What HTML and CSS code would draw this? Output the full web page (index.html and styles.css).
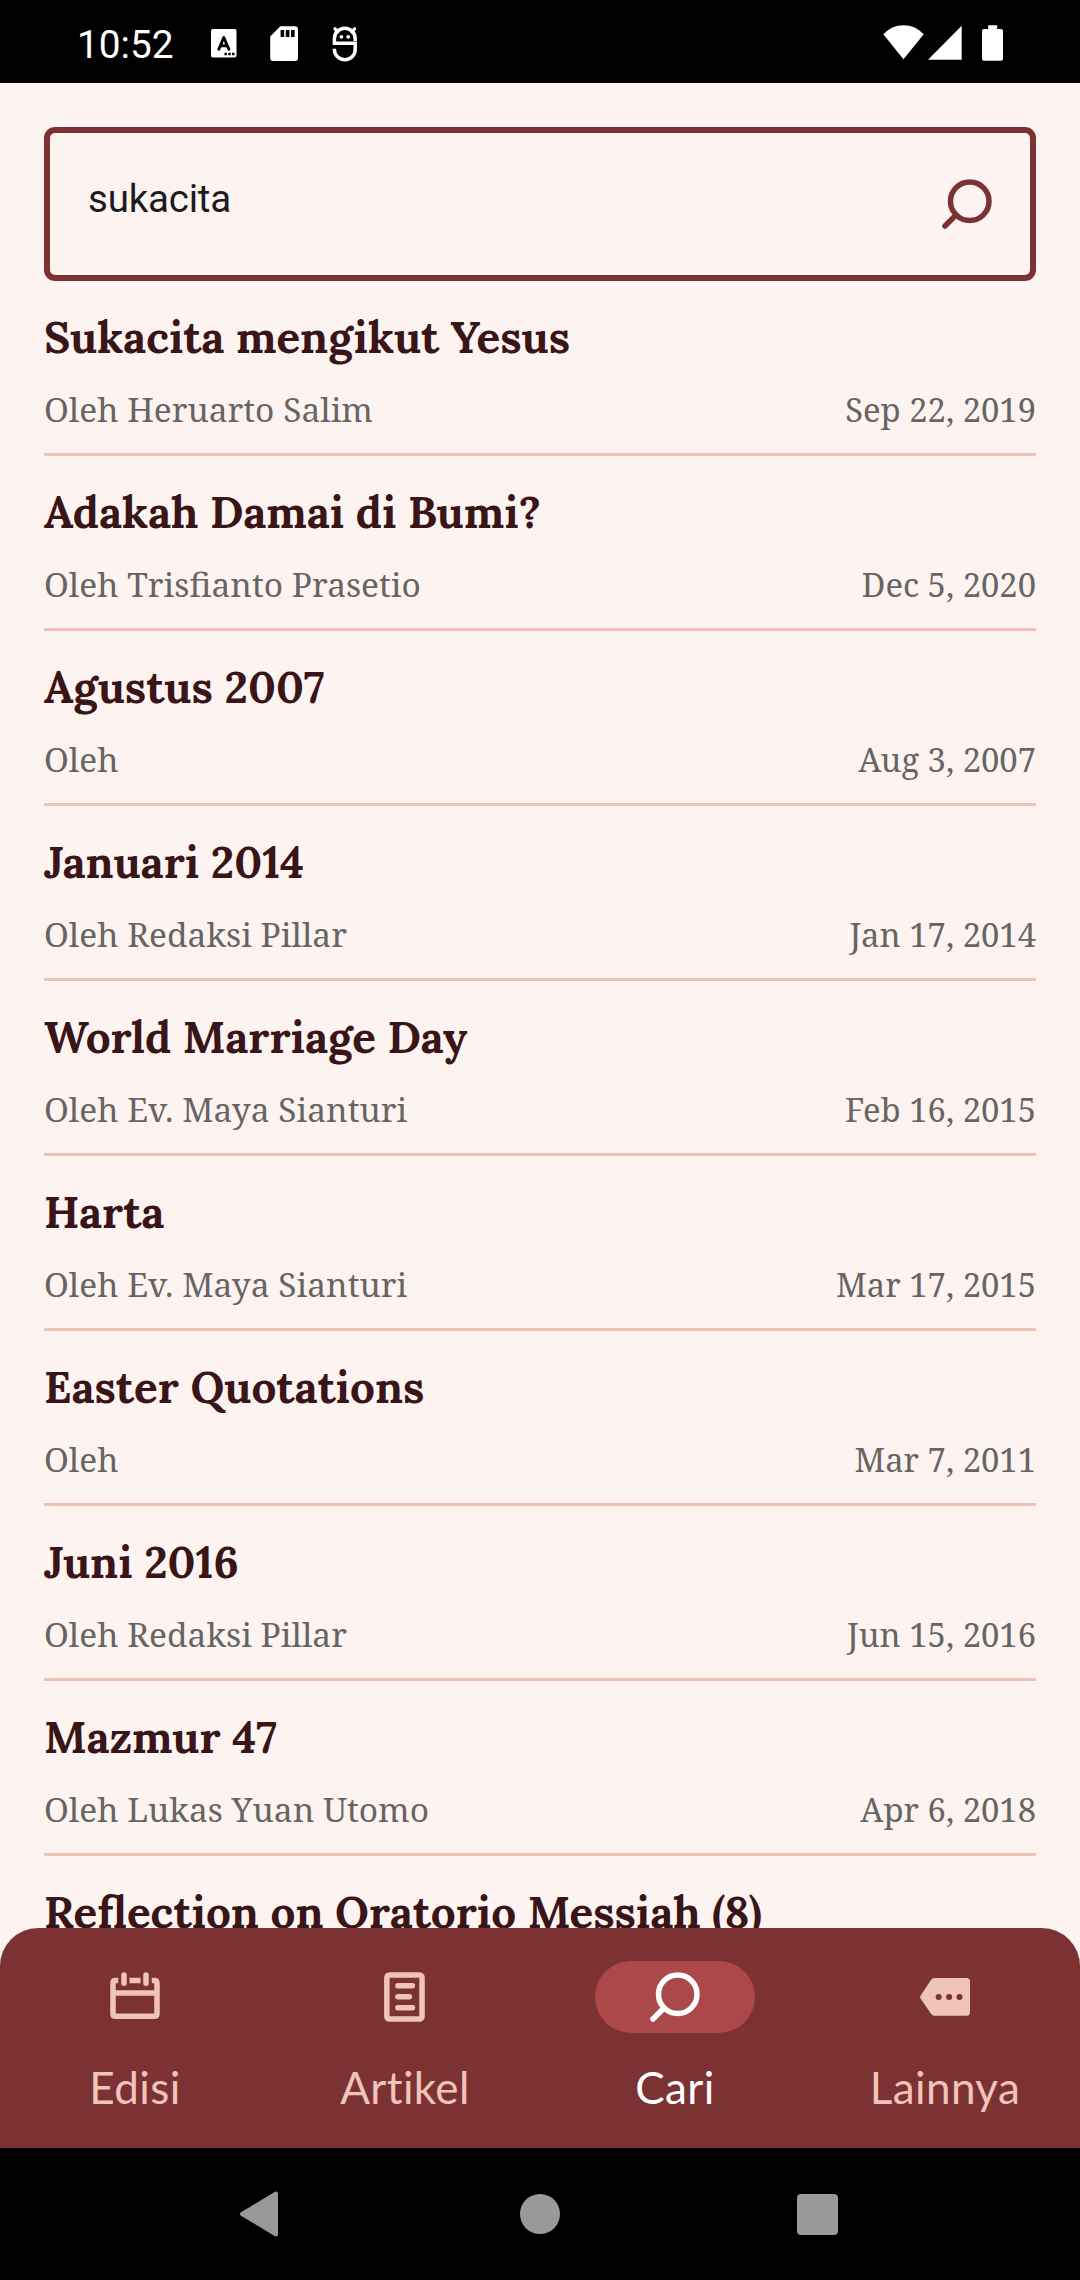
FILE: index.html
```
<!DOCTYPE html>
<html lang="id">
<head>
<meta charset="utf-8">
<title>Cari</title>
<link rel="stylesheet" href="styles.css">
</head>
<body>
<div class="screen">
  <header class="status-bar">
    <div class="status-left">
      <span class="clock">10:52</span>
      <svg class="ic-keyboard" width="26" height="29" viewBox="0 0 26 29">
        <rect width="25.5" height="28.5" rx="2" fill="#fff"/>
        <path d="M7.8 20.2 L12.8 8.5 L17.8 20.2 M9.6 16.8 H16" fill="none" stroke="#000" stroke-width="2.9" stroke-linecap="round" stroke-linejoin="round"/>
        <path d="M13.5 23.8 h2.4 v2.4 h-2.4z M17.3 23.8 h2.4 v2.4 h-2.4z M21.1 23.8 h2.4 v2.4 h-2.4z" fill="#000"/>
      </svg>
      <svg class="ic-sd" width="28" height="35" viewBox="0 0 28 35">
        <path d="M10.3 0.3 H25 Q28 0.3 28 3.3 V32 Q28 35 25 35 H3 Q0.2 35 0.2 32 V10.5 Z" fill="#fff"/>
        <path d="M10.6 4 h3.6 v7 h-3.6z M15.8 4 h3.6 v7 h-3.6z M21 4 h3.6 v7 h-3.6z" fill="#000"/>
      </svg>
      <svg class="ic-robot" width="26" height="36" viewBox="0 0 26 36">
        <path d="M23.2 15 V12.6 A10.2 10.2 0 0 0 2.4 12.6 V17.3 H23.2 V23.6 A10.3 10 0 0 1 2.4 23.6 V22.8" fill="none" stroke="#fff" stroke-width="3.5"/>
        <path d="M3 2.8 L5.8 5.8 M22.6 2.8 L19.8 5.8" stroke="#fff" stroke-width="3.2" stroke-linecap="round"/>
        <circle cx="9.4" cy="10.8" r="1.9" fill="#fff"/><circle cx="16.2" cy="10.8" r="1.9" fill="#fff"/>
      </svg>
    </div>
    <div class="status-right">
      <svg width="42" height="36" viewBox="0 0 42 36"><path d="M0.3 9.3 Q8.5 0.3 20.5 0.3 Q32.5 0.3 40.7 9.3 L20.5 34.3 Z" fill="#fff"/></svg>
      <svg class="ic-signal" width="34" height="36" viewBox="0 0 34 36"><path d="M33.7 0.8 V34.8 H0 Z" fill="#fff"/></svg>
      <svg class="ic-battery" width="21" height="36" viewBox="0 0 21 36"><path d="M6.2 0.3 H15.2 V4 H19 Q21 4 21 6 V33.8 Q21 35.8 19 35.8 H2 Q0 35.8 0 33.8 V6 Q0 4 2 4 H6.2 Z" fill="#fff"/></svg>
    </div>
  </header>

  <main class="content">
    <div class="search-box">
      <span class="search-text">sukacita</span>
      <svg class="search-icon" viewBox="0 0 24 24"><circle cx="13" cy="11" r="7"/><path d="M8 16 L4 20"/></svg>
    </div>

    <ul class="results">
      <li class="result"><h2>Sukacita mengikut Yesus</h2><div class="meta"><span class="author">Oleh Heruarto Salim</span><time>Sep 22, 2019</time></div></li>
      <li class="result"><h2>Adakah Damai di Bumi?</h2><div class="meta"><span class="author">Oleh Trisfianto Prasetio</span><time>Dec 5, 2020</time></div></li>
      <li class="result"><h2>Agustus 2007</h2><div class="meta"><span class="author">Oleh</span><time>Aug 3, 2007</time></div></li>
      <li class="result"><h2>Januari 2014</h2><div class="meta"><span class="author">Oleh Redaksi Pillar</span><time>Jan 17, 2014</time></div></li>
      <li class="result"><h2>World Marriage Day</h2><div class="meta"><span class="author">Oleh Ev. Maya Sianturi</span><time>Feb 16, 2015</time></div></li>
      <li class="result"><h2>Harta</h2><div class="meta"><span class="author">Oleh Ev. Maya Sianturi</span><time>Mar 17, 2015</time></div></li>
      <li class="result"><h2>Easter Quotations</h2><div class="meta"><span class="author">Oleh</span><time>Mar 7, 2011</time></div></li>
      <li class="result"><h2>Juni 2016</h2><div class="meta"><span class="author">Oleh Redaksi Pillar</span><time>Jun 15, 2016</time></div></li>
      <li class="result"><h2>Mazmur 47</h2><div class="meta"><span class="author">Oleh Lukas Yuan Utomo</span><time>Apr 6, 2018</time></div></li>
      <li class="result"><h2>Reflection on Oratorio Messiah (8)</h2></li>
    </ul>
  </main>

  <nav class="tabs">
    <a class="tab">
      <span class="pill"><svg class="line-icon" viewBox="0 0 24 24"><path d="M5.9 6 H4.9 Q4 6 4 6.9 V18.1 Q4 19 4.9 19 H19.1 Q20 19 20 18.1 V6.9 Q20 6 19.1 6 H18.1 M10 6 H14 M4 10.5 H20"/><path class="round" d="M8 4 V7 M16 4 V7"/></svg></span>
      <span class="label">Edisi</span>
    </a>
    <a class="tab">
      <span class="pill"><svg class="line-icon" viewBox="0 0 24 24"><rect x="5.4" y="4" width="12.8" height="16" rx="0.9"/><path class="round" d="M9.4 7.9 H14.7 M9.4 11.9 H13.6 M9.4 15.9 H14.7"/></svg></span>
      <span class="label">Artikel</span>
    </a>
    <a class="tab active">
      <span class="pill"><svg class="line-icon" viewBox="0 0 24 24"><circle cx="13" cy="11" r="7"/><path class="round" d="M8 16 L4 20"/></svg></span>
      <span class="label">Cari</span>
    </a>
    <a class="tab">
      <span class="pill"><svg class="solid-icon" viewBox="0 0 24 24"><path fill-rule="evenodd" d="M3.1 12.5 Q2.75 12 3.1 11.5 L6.9 5.8 Q7.4 5.1 8.2 5.1 H19.8 Q21.1 5.1 21.1 6.4 V17.5 Q21.1 18.8 19.8 18.8 H8.2 Q7.4 18.8 6.9 18.1 Z M8.6 12 a1.1 1.1 0 1 0 2.2 0 a1.1 1.1 0 1 0 -2.2 0 Z M12.4 12 a1.1 1.1 0 1 0 2.2 0 a1.1 1.1 0 1 0 -2.2 0 Z M16.2 12 a1.1 1.1 0 1 0 2.2 0 a1.1 1.1 0 1 0 -2.2 0 Z"/></svg></span>
      <span class="label">Lainnya</span>
    </a>
  </nav>

  <footer class="system-nav">
    <svg width="40" height="46" viewBox="0 0 40 46"><path d="M37 2.5 V43.5 L3 23 Z" fill="#999" stroke="#999" stroke-width="4" stroke-linejoin="round"/></svg>
    <span class="home"></span>
    <span class="recents"></span>
  </footer>
</div>
</body>
</html>
```
FILE: styles.css
```
* { box-sizing: border-box; margin: 0; padding: 0; }

body { background: #fdf4f2; }

.screen {
  width: 1080px;
  height: 2280px;
  display: flex;
  flex-direction: column;
  overflow: hidden;
}

svg { display: block; flex: none; }

.status-bar {
  height: 83px;
  flex: none;
  padding: 0 77px;
  display: flex;
  justify-content: space-between;
  align-items: flex-start;
  background: #000;
  color: #fff;
}
.status-left, .status-right { display: flex; align-items: flex-start; }
.status-right { padding-top: 25px; }
.clock {
  width: 134px;
  padding-top: 22px;
  font: 400 38.8px/45px Roboto, sans-serif;
}
.ic-keyboard { margin-top: 29px; }
.ic-sd { margin: 26px 0 0 33px; }
.ic-robot { margin: 26px 0 0 34px; }
.ic-signal { margin-left: 3px; }
.ic-battery { margin-left: 20px; }

.content {
  flex: 1;
  min-height: 0;
  overflow: hidden;
  padding: 44px 44px 0;
}

.search-box {
  height: 154px;
  border: 6px solid #7c3233;
  border-radius: 11px;
  padding: 0 30px 0 38px;
  display: flex;
  align-items: center;
  justify-content: space-between;
}
.search-text {
  padding-bottom: 12px;
  font: 400 38.5px/45px Roboto, sans-serif;
  letter-spacing: -0.2px;
  color: #1c1b1f;
}
.search-icon {
  width: 66px;
  height: 66px;
  fill: none;
  stroke: #7c3233;
  stroke-width: 2;
  stroke-linecap: round;
}

.results { list-style: none; }
.result {
  height: 175px;
  padding-top: 28px;
  border-bottom: 3px solid #f0c3b9;
}
.result h2 {
  font: 680 44px/56px Lora, "Liberation Serif", serif;
  color: #3a1518;
  white-space: nowrap;
}
.meta {
  margin-top: 22px;
  display: flex;
  justify-content: space-between;
  font: 390 32.8px/45px "Noto Serif", "Liberation Serif", serif;
  color: #686462;
}
.author { font-size: 33.5px; font-weight: 365; }

.tabs {
  height: 220px;
  flex: none;
  padding-top: 33px;
  display: grid;
  grid-template-columns: repeat(4, 1fr);
  background: #7c3233;
  border-radius: 38px 38px 0 0;
}
.tab {
  display: flex;
  flex-direction: column;
  align-items: center;
  gap: 28px;
  color: #f0c3bb;
}
.pill {
  width: 160px;
  height: 72px;
  border-radius: 36px;
  display: flex;
  align-items: center;
  justify-content: center;
}
.active { color: #fff; }
.active .pill { background: #ac484a; }
.line-icon, .solid-icon { width: 66px; height: 66px; }
.line-icon { fill: none; stroke: currentColor; stroke-width: 2; }
.round { stroke-linecap: round; }
.solid-icon { fill: currentColor; }
.label {
  font: 400 44px/53px Lato, sans-serif;
  letter-spacing: 0.4px;
}

.system-nav {
  height: 132px;
  flex: none;
  padding: 0 242px 0 239px;
  display: flex;
  align-items: center;
  justify-content: space-between;
  background: #000;
}
.home, .recents { background: #999; }
.home { width: 40px; height: 40px; margin-left: 3px; border-radius: 50%; }
.recents { width: 41px; height: 41px; border-radius: 4px; }
```
